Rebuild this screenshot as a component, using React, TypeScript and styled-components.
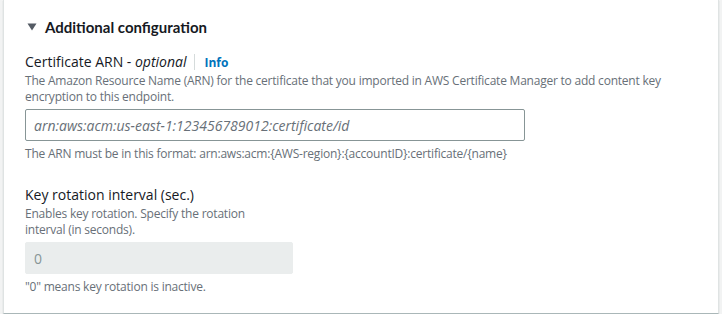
import styled, { createGlobalStyle } from 'styled-components';

const GlobalStyle = createGlobalStyle`
  html, body {
    margin: 0;
    padding: 0;
    background: #f2f3f3;
  }
  body {
    font-family: 'Open Sans', 'Noto Sans', Arial, sans-serif;
    color: #16191f;
  }
`;

const Page = styled.div`
  padding: 0 3px 1px 3px;
`;

const Card = styled.section`
  background: #ffffff;
  border-left: 1px solid #dfe3e3;
  border-right: 1px solid #dfe3e3;
  border-bottom: 1px solid #aab7b8;
  box-shadow: 0 1px 1px 0 rgba(0, 28, 36, 0.2);
  padding: 17px 20px 18px 21px;
`;

const Header = styled.div`
  display: flex;
  align-items: center;
  gap: 8px;
  height: 20px;
  padding-left: 2px;
`;

const Caret = styled.svg`
  width: 10px;
  height: 8px;
  flex: none;
`;

const HeaderTitle = styled.h2`
  margin: 0;
  font-family: Lato, 'Open Sans', sans-serif;
  font-size: 15px;
  line-height: 20px;
  font-weight: 700;
  color: #16191f;
`;

const Fields = styled.div`
  display: flex;
  flex-direction: column;
  gap: 22px;
  margin-top: 14px;
`;

const Field = styled.div<{ $width?: number }>`
  display: flex;
  flex-direction: column;
  max-width: ${({ $width }) => ($width ? `${$width}px` : 'none')};
`;

const LabelRow = styled.div`
  display: flex;
  align-items: center;
  height: 22px;
`;

const Label = styled.label`
  font-size: 14px;
  line-height: 22px;
  color: #16191f;

  em {
    font-style: italic;
  }
`;

const Divider = styled.span`
  width: 1px;
  height: 16px;
  background: #d5dbdb;
  margin: 0 9px 0 8px;
`;

const InfoLink = styled.a`
  font-size: 12px;
  font-weight: 700;
  color: #0073bb;
  text-decoration: none;
`;

const Description = styled.div<{ $maxWidth?: number }>`
  max-width: ${({ $maxWidth }) => ($maxWidth ? `${$maxWidth}px` : 'none')};
  font-size: 12px;
  line-height: 16px;
  letter-spacing: -0.22px;
  color: #687078;
`;

const Constraint = styled(Description)`
  margin-top: 5px;
`;

const Input = styled.input<{ $width: number }>`
  box-sizing: border-box;
  width: ${({ $width }) => $width}px;
  height: 32px;
  margin-top: 4px;
  padding: 0 8px;
  border: 1px solid #879596;
  border-radius: 2px;
  background: #ffffff;
  font-family: inherit;
  font-size: 14px;
  color: #16191f;
  outline: none;

  &::placeholder {
    color: #687078;
    font-style: italic;
    opacity: 1;
  }

  &:disabled {
    background: #eaeded;
    border-color: #eaeded;
    color: #879596;
  }
`;

export default function App() {
  return (
    <>
      <GlobalStyle />
      <Page>
        <Card>
          <Header>
            <Caret viewBox="0 0 10 8">
              <path d="M0.5 0.5 L9.5 0.5 L5 7.5 Z" fill="#545b64" />
            </Caret>
            <HeaderTitle>Additional configuration</HeaderTitle>
          </Header>

          <Fields>
            <Field>
              <LabelRow>
                <Label>
                  Certificate ARN - <em>optional</em>
                </Label>
                <Divider />
                <InfoLink href="#">Info</InfoLink>
              </LabelRow>
              <Description>
                The Amazon Resource Name (ARN) for the certificate that you imported in AWS
                Certificate Manager to add content key encryption to this endpoint.
              </Description>
              <Input
                $width={500}
                placeholder="arn:aws:acm:us-east-1:123456789012:certificate/id"
              />
              <Constraint>
                The ARN must be in this format:
                arn:aws:acm:&#123;AWS-region&#125;:&#123;accountID&#125;:certificate/&#123;name&#125;
              </Constraint>
            </Field>

            <Field $width={268}>
              <LabelRow>
                <Label>Key rotation interval (sec.)</Label>
              </LabelRow>
              <Description $maxWidth={250}>
                Enables key rotation. Specify the rotation interval (in seconds).
              </Description>
              <Input $width={268} disabled value="0" readOnly />
              <Constraint>"0" means key rotation is inactive.</Constraint>
            </Field>
          </Fields>
        </Card>
      </Page>
    </>
  );
}
